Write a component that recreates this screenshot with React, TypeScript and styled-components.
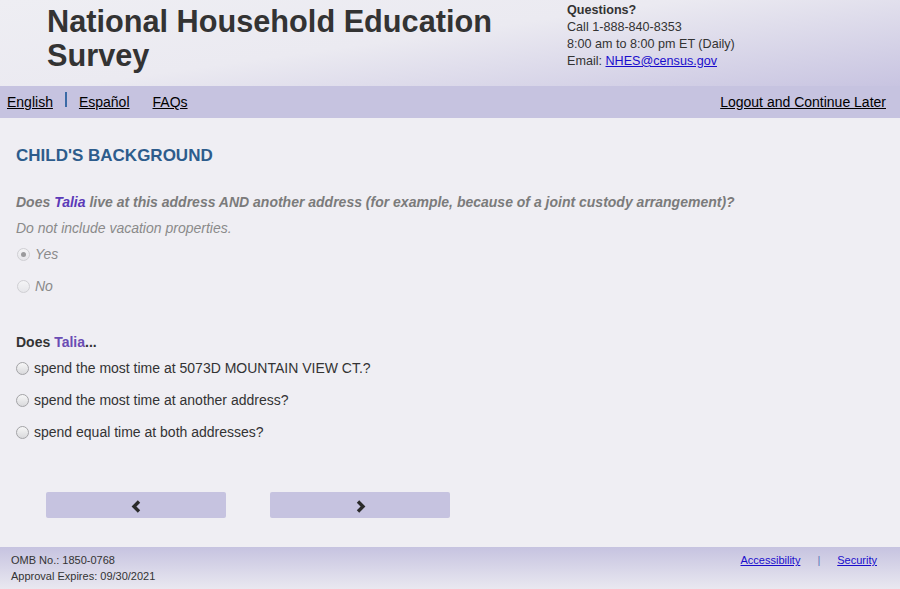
import styled, { createGlobalStyle } from "styled-components";

const GlobalStyle = createGlobalStyle`
  html, body {
    margin: 0;
    padding: 0;
    background: #efeef3;
    font-family: "Liberation Sans", Arial, sans-serif;
    color: #333;
  }
  * { box-sizing: border-box; }
`;

const Page = styled.div`
  display: flex;
  flex-direction: column;
  height: 100vh;
  min-height: 589px;
`;

const Header = styled.header`
  height: 86px;
  display: flex;
  background: linear-gradient(172deg, #eeeef3 0%, #ebeaf1 45%, #c8c4e1 100%);
`;

const Title = styled.h1`
  margin: 5px 0 0 47px;
  width: 490px;
  font-size: 30.7px;
  line-height: 34px;
  font-weight: bold;
  color: #333;
`;

const Contact = styled.div`
  margin-left: 30px;
  padding-top: 2px;
  font-size: 12.6px;
  line-height: 17px;
  color: #333;
`;

const ContactTitle = styled.div`
  font-weight: bold;
`;

const MailLink = styled.a`
  color: #1a0dcc;
  text-decoration: underline;
`;

const Nav = styled.nav`
  height: 32px;
  background: #c6c3e0;
  display: flex;
  align-items: center;
  padding: 0 14px 0 7px;
  font-size: 14px;
`;

const NavLink = styled.a<{ $gap?: number }>`
  color: #000;
  text-decoration: underline;
  margin-right: ${(p) => p.$gap ?? 0}px;
`;

const NavDivider = styled.span`
  width: 2px;
  height: 15px;
  background: #3b6aa6;
  margin: -6px 12px 0 12px;
`;

const Spacer = styled.div`
  flex: 1;
`;

const Main = styled.main`
  flex: 1;
  padding: 28px 16px 0 16px;
`;

const Heading = styled.h2`
  margin: 0;
  font-size: 17px;
  line-height: 20px;
  font-weight: bold;
  color: #2d5c8c;
`;

const Question = styled.p<{ $disabled?: boolean; $top: number }>`
  margin: ${(p) => p.$top}px 0 0 0;
  font-size: 14px;
  line-height: 20px;
  font-weight: bold;
  font-style: ${(p) => (p.$disabled ? "italic" : "normal")};
  color: ${(p) => (p.$disabled ? "#7b7b7b" : "#333")};
`;

const Name = styled.span<{ $disabled?: boolean }>`
  color: ${(p) => (p.$disabled ? "#5b3ab8" : "#6a4cb4")};
`;

const Hint = styled.p`
  margin: 6px 0 0 0;
  font-size: 14px;
  line-height: 20px;
  font-style: italic;
  color: #8a8a8a;
`;

const Options = styled.div`
  margin-top: 6px;
  display: flex;
  flex-direction: column;
  gap: 12px;
`;

const Option = styled.label<{ $disabled?: boolean }>`
  display: flex;
  align-items: center;
  height: 20px;
  font-size: 14px;
  font-style: ${(p) => (p.$disabled ? "italic" : "normal")};
  color: ${(p) => (p.$disabled ? "#8a8a8a" : "#333")};
`;

const Radio = styled.span<{ $checked?: boolean; $disabled?: boolean }>`
  position: relative;
  width: 13px;
  height: 13px;
  border-radius: 50%;
  margin-right: 5px;
  margin-left: ${(p) => (p.$disabled ? "1px" : "0")};
  border: 1px solid ${(p) => (p.$disabled ? "#cfcfd3" : "#a3a3a6")};
  background: ${(p) =>
    p.$disabled
      ? "linear-gradient(#f4f4f6, #e6e6ea)"
      : "linear-gradient(#f7f7f7, #d9d9dc)"};
  &::after {
    content: "";
    display: ${(p) => (p.$checked ? "block" : "none")};
    position: absolute;
    left: 3px;
    top: 3px;
    width: 5px;
    height: 5px;
    border-radius: 50%;
    background: #9a9a9c;
  }
`;

const Buttons = styled.div`
  display: flex;
  gap: 44px;
  margin: 50px 0 0 30px;
`;

const NavButton = styled.button`
  width: 180px;
  height: 26px;
  border: none;
  border-radius: 2px;
  background: #c6c3e0;
  display: flex;
  align-items: center;
  justify-content: center;
  padding: 2px 0 0 0;
  cursor: pointer;
`;

const Footer = styled.footer`
  height: 42px;
  display: flex;
  justify-content: space-between;
  align-items: flex-start;
  padding: 5px 23px 0 11px;
  background: linear-gradient(#c6c3e0, #e9e8f0);
  font-size: 11px;
  line-height: 16px;
  color: #333;
`;

const FooterLinks = styled.div`
  display: flex;
`;

const FooterLink = styled.a`
  color: #1a0dcc;
  text-decoration: underline;
`;

const FooterDivider = styled.span`
  color: #5b77b8;
  margin: 0 17px 0 17px;
`;

function Chevron({ dir }: { dir: "left" | "right" }) {
  const points = dir === "left" ? "8,1.5 3,6.5 8,11.5" : "3,1.5 8,6.5 3,11.5";
  return (
    <svg width="11" height="13" viewBox="0 0 11 13">
      <polyline points={points} fill="none" stroke="#2a2a2a" strokeWidth="3.4" />
    </svg>
  );
}

export default function App() {
  return (
    <>
      <GlobalStyle />
      <Page>
        <Header>
          <Title>National Household Education Survey</Title>
          <Contact>
            <ContactTitle>Questions?</ContactTitle>
            <div>Call 1-888-840-8353</div>
            <div>8:00 am to 8:00 pm ET (Daily)</div>
            <div>
              Email: <MailLink href="#">NHES@census.gov</MailLink>
            </div>
          </Contact>
        </Header>
        <Nav>
          <NavLink href="#">English</NavLink>
          <NavDivider />
          <NavLink href="#" $gap={23}>Español</NavLink>
          <NavLink href="#">FAQs</NavLink>
          <Spacer />
          <NavLink href="#">Logout and Continue Later</NavLink>
        </Nav>
        <Main>
          <Heading>CHILD'S BACKGROUND</Heading>
          <Question $disabled $top={26}>
            Does <Name $disabled>Talia</Name> live at this address AND another
            address (for example, because of a joint custody arrangement)?
          </Question>
          <Hint>Do not include vacation properties.</Hint>
          <Options>
            <Option $disabled>
              <Radio $disabled $checked />
              Yes
            </Option>
            <Option $disabled>
              <Radio $disabled />
              No
            </Option>
          </Options>
          <Question $top={36}>
            Does <Name>Talia</Name>...
          </Question>
          <Options>
            <Option>
              <Radio />
              spend the most time at 5073D MOUNTAIN VIEW CT.?
            </Option>
            <Option>
              <Radio />
              spend the most time at another address?
            </Option>
            <Option>
              <Radio />
              spend equal time at both addresses?
            </Option>
          </Options>
          <Buttons>
            <NavButton aria-label="Previous">
              <Chevron dir="left" />
            </NavButton>
            <NavButton aria-label="Next">
              <Chevron dir="right" />
            </NavButton>
          </Buttons>
        </Main>
        <Footer>
          <div>
            <div>OMB No.: 1850-0768</div>
            <div>Approval Expires: 09/30/2021</div>
          </div>
          <FooterLinks>
            <FooterLink href="#">Accessibility</FooterLink>
            <FooterDivider>|</FooterDivider>
            <FooterLink href="#">Security</FooterLink>
          </FooterLinks>
        </Footer>
      </Page>
    </>
  );
}
